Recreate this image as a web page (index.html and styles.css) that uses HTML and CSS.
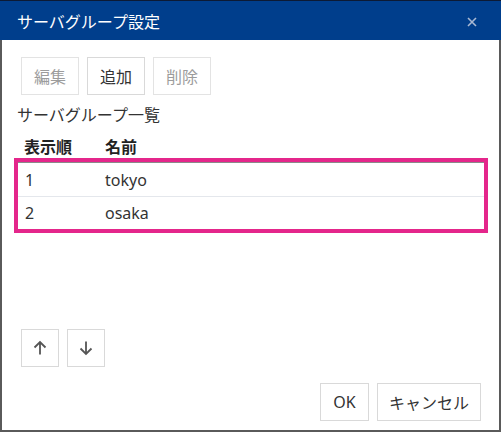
FILE: index.html
```html
<!DOCTYPE html>
<html>
<head>
<title>サーバグループ設定</title>
<link rel="stylesheet" href="styles.css">
</head>
<body>

<div id="dialog">
    <div class="titlebar">
        <span class="title">サーバグループ設定</span>
        <svg class="close" width="10" height="10" viewBox="0 0 10 10"><path d="M1 1l8 8M9 1l-8 8"/></svg>
    </div>

    <div class="content">
        <div class="toolbar">
            <button class="btn" disabled>編集</button>
            <button class="btn">追加</button>
            <button class="btn" disabled>削除</button>
        </div>

        <div class="list-label">サーバグループ一覧</div>

        <div class="list-head">
            <span class="col-order">表示順</span>
            <span class="col-name">名前</span>
        </div>
        <div class="list-rows">
            <div class="row">
                <span class="col-order">1</span>
                <span class="col-name">tokyo</span>
            </div>
            <div class="row">
                <span class="col-order">2</span>
                <span class="col-name">osaka</span>
            </div>
        </div>

        <div class="move">
            <button class="btn icon-btn" title="上へ">
                <svg width="16" height="16" viewBox="0 0 16 16"><path d="M8 14.5V2M2.5 7.5L8 2l5.5 5.5"/></svg>
            </button>
            <button class="btn icon-btn" title="下へ">
                <svg width="16" height="16" viewBox="0 0 16 16"><path d="M8 1.5V14M2.5 8.5L8 14l5.5-5.5"/></svg>
            </button>
        </div>

        <div class="footer">
            <button class="btn ok">OK</button>
            <button class="btn">キャンセル</button>
        </div>
    </div>
</div>

</body>
</html>
```

FILE: styles.css
```css
/* Dialog layout */
body {
    margin: 0;
    font-family: "Noto Sans", "Noto Sans CJK JP", sans-serif;
    color: #333;
    background: #fff;
}

#dialog {
    width: 501px;
    height: 432px;
    box-sizing: border-box;
    border-left: 2px solid #5a5a5a;
    border-right: 2px solid #5a5a5a;
    border-bottom: 2px solid #5a5a5a;
    display: flex;
    flex-direction: column;
}

.titlebar {
    height: 40px;
    box-sizing: border-box;
    margin: 0 -2px;
    border-top: 1px solid #0c1a35;
    background-color: #003e8c;
    color: #fff;
    display: flex;
    align-items: center;
    justify-content: space-between;
    padding: 0 24px 0 17px;
}

.title {
    font-size: 16px;
}

.close {
    margin-top: 2px;
}

.close path {
    stroke: #a9b9d3;
    stroke-width: 1.6;
}

.content {
    flex: 1;
    display: flex;
    flex-direction: column;
    padding: 17px 14px 9px 15px;
}

.btn {
    height: 38px;
    padding: 0 11px;
    font-family: inherit;
    font-size: 16px;
    color: #333;
    background: #fff;
    border: 1px solid #d9d9d9;
    cursor: pointer;
}

.btn:disabled {
    color: #9c9c9c;
    border-color: #e3e3e3;
    cursor: default;
}

.toolbar, .move {
    display: flex;
    gap: 8px;
    padding: 0 4px;
}

.toolbar .btn {
    width: 58px;
}

.list-label {
    font-size: 16px;
    line-height: 22px;
    margin-top: 9px;
}

.list-head {
    display: flex;
    height: 24px;
    margin-top: 8px;
    padding-left: 7px;
    font-weight: bold;
    font-size: 16px;
    align-items: center;
    color: #222;
}

.list-head .col-order {
    width: 81px;
}

.list-rows {
    margin: 0 -3px;
    border: 4px solid #e4268b;
}

.row {
    display: flex;
    align-items: center;
    height: 33px;
    padding-left: 7px;
    font-size: 16px;
}

.row:first-child {
    border-top: 1px solid #8a8a8a;
    border-bottom: 1px solid #e4e7ec;
}

.row:last-child {
    height: 32px;
}

.row .col-order {
    width: 80px;
}

.move {
    margin-top: auto;
}

.icon-btn {
    width: 38px;
    padding: 0;
    display: flex;
    align-items: center;
    justify-content: center;
}

.icon-btn path {
    fill: none;
    stroke: #555;
    stroke-width: 1.8;
}

.footer {
    display: flex;
    justify-content: flex-end;
    gap: 8px;
    margin-top: 16px;
    padding-right: 4px;
}

.footer .ok {
    width: 49px;
}
```
